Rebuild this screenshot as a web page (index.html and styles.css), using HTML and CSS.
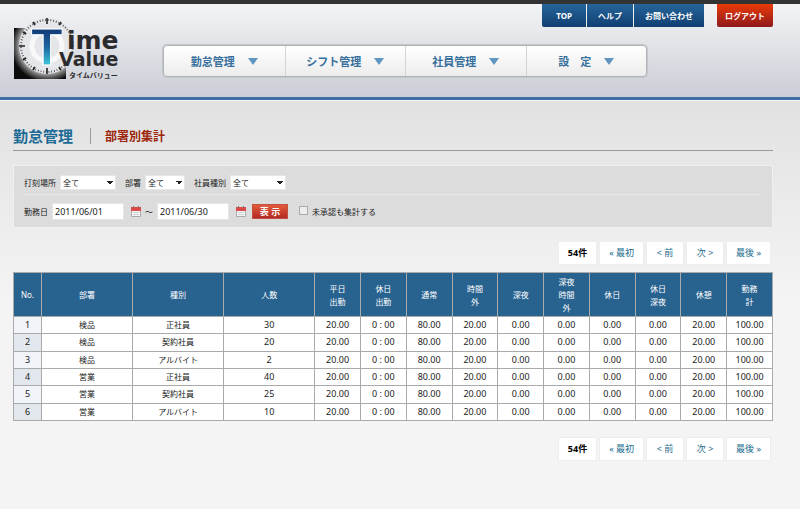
FILE: index.html
```html
<!DOCTYPE html>
<html lang="ja">
<head>
  <meta charset="UTF-8">
  <title>Time Value タイムバリュー | 部署別集計</title>
  <link rel="stylesheet" href="styles.css">
</head>
<body>
  <header class="header">
    <a class="logo" href="#">
      <svg width="110" height="66" viewBox="0 0 110 66" role="img" aria-label="Time Value">
        <defs>
          <radialGradient id="shade" gradientUnits="userSpaceOnUse" cx="34" cy="31" r="44">
            <stop offset="0.6" stop-color="#ccc"/>
            <stop offset="0.68" stop-color="#777"/>
            <stop offset="0.82" stop-color="#0c0c0c"/>
          </radialGradient>
          <linearGradient id="blue" x1="0" y1="0" x2="0" y2="1">
            <stop offset="0.2" stop-color="#123a78"/>
            <stop offset="0.5" stop-color="#1c66a0"/>
            <stop offset="0.8" stop-color="#3fc4d8"/>
          </linearGradient>
        </defs>
        <rect x="1" y="13" width="52" height="51" fill="url(#shade)"/>
        <circle cx="34" cy="31" r="28" fill="#e4e6e9"/>
        <circle cx="34" cy="31" r="15" fill="none" stroke="#f8f8f9" stroke-width="5"/>
        <circle cx="34" cy="31" r="26" fill="none" stroke="#444" stroke-width="2" stroke-dasharray="0.8 1.923"/>
        <g stroke="#222" stroke-width="1.6">
          <path d="M34 3v6M34 53v6M6 31h6M20 6.800l2 3.400M48 6.800l-2 3.400M9.800 17l3.400 2M9.800 45l3.400-2M20 55.200l2-3.400M48 55.200l-2-3.400"/>
        </g>
        <text class="logo-t" x="18" y="50" fill="url(#blue)">T</text>
        <text class="logo-word" x="54" y="34">ime</text>
        <text class="logo-value" x="46" y="51">Value</text>
        <text class="logo-kana" x="56" y="63">タイムバリュー</text>
      </svg>
    </a>
    <div class="header-main">
      <div class="top-links">
        <a href="#">TOP</a>
        <a href="#">ヘルプ</a>
        <a href="#">お問い合わせ</a>
        <a class="logout" href="#">ログアウト</a>
      </div>
      <nav class="menu">
        <a href="#">勤怠管理<span class="arrow"></span></a>
        <a href="#">シフト管理<span class="arrow"></span></a>
        <a href="#">社員管理<span class="arrow"></span></a>
        <a href="#">設　定<span class="arrow"></span></a>
      </nav>
    </div>
  </header>

  <main class="content">
    <div class="title">
      <h1>勤怠管理</h1>
      <h2>部署別集計</h2>
    </div>

    <form class="search">
      <div class="search-row">
        <label for="place">打刻場所</label>
        <select id="place"><option>全て</option></select>
        <label for="section">部署</label>
        <select id="section" class="short"><option>全て</option></select>
        <label for="kind">社員種別</label>
        <select id="kind"><option>全て</option></select>
      </div>
      <div class="search-row">
        <label for="from">勤務日</label>
        <input type="text" id="from" value="2011/06/01">
        <button type="button" class="calendar" aria-label="開始日">
          <svg width="10" height="11" viewBox="0 0 10 11"><path d="M0.500 1.500h9v9h-9z" fill="#f4f4f4" stroke="#aaa"/><path d="M0 1h10v4H0z" fill="#dc4a48"/><path d="M2 0h1v2H2zM7 0h1v2H7z" fill="#777"/><path d="M2 6h6v1H2zM2 8h6v1H2z" fill="#c9d5d5"/></svg>
        </button>
        <span>～</span>
        <input type="text" id="to" value="2011/06/30" aria-label="終了日">
        <button type="button" class="calendar" aria-label="終了日">
          <svg width="10" height="11" viewBox="0 0 10 11"><path d="M0.500 1.500h9v9h-9z" fill="#f4f4f4" stroke="#aaa"/><path d="M0 1h10v4H0z" fill="#dc4a48"/><path d="M2 0h1v2H2zM7 0h1v2H7z" fill="#777"/><path d="M2 6h6v1H2zM2 8h6v1H2z" fill="#c9d5d5"/></svg>
        </button>
        <button type="button" class="show">表 示</button>
        <input type="checkbox" id="pending">
        <label for="pending">未承認も集計する</label>
      </div>
    </form>

    <div class="pager">
      <strong>54件</strong>
      <a href="#">« 最初</a>
      <a href="#">&lt; 前</a>
      <a href="#">次 &gt;</a>
      <a href="#">最後 »</a>
    </div>

    <table class="summary">
      <colgroup>
        <col class="col-no">
        <col class="col-wide" span="3">
        <col span="10">
      </colgroup>
      <thead>
        <tr>
          <th>No.</th><th>部署</th><th>種別</th><th>人数</th>
          <th>平日<br>出勤</th><th>休日<br>出勤</th><th>通常</th><th>時間<br>外</th><th>深夜</th>
          <th>深夜<br>時間<br>外</th><th>休日</th><th>休日<br>深夜</th><th>休憩</th><th>勤務<br>計</th>
        </tr>
      </thead>
      <tbody>
        <tr><th>1</th><td class="name">検品</td><td class="name">正社員</td><td>30</td><td>20.00</td><td>0 : 00</td><td>80.00</td><td>20.00</td><td>0.00</td><td>0.00</td><td>0.00</td><td>0.00</td><td>20.00</td><td>100.00</td></tr>
        <tr><th>2</th><td class="name">検品</td><td class="name">契約社員</td><td>20</td><td>20.00</td><td>0 : 00</td><td>80.00</td><td>20.00</td><td>0.00</td><td>0.00</td><td>0.00</td><td>0.00</td><td>20.00</td><td>100.00</td></tr>
        <tr><th>3</th><td class="name">検品</td><td class="name">アルバイト</td><td>2</td><td>20.00</td><td>0 : 00</td><td>80.00</td><td>20.00</td><td>0.00</td><td>0.00</td><td>0.00</td><td>0.00</td><td>20.00</td><td>100.00</td></tr>
        <tr><th>4</th><td class="name">営業</td><td class="name">正社員</td><td>40</td><td>20.00</td><td>0 : 00</td><td>80.00</td><td>20.00</td><td>0.00</td><td>0.00</td><td>0.00</td><td>0.00</td><td>20.00</td><td>100.00</td></tr>
        <tr><th>5</th><td class="name">営業</td><td class="name">契約社員</td><td>25</td><td>20.00</td><td>0 : 00</td><td>80.00</td><td>20.00</td><td>0.00</td><td>0.00</td><td>0.00</td><td>0.00</td><td>20.00</td><td>100.00</td></tr>
        <tr><th>6</th><td class="name">営業</td><td class="name">アルバイト</td><td>10</td><td>20.00</td><td>0 : 00</td><td>80.00</td><td>20.00</td><td>0.00</td><td>0.00</td><td>0.00</td><td>0.00</td><td>20.00</td><td>100.00</td></tr>
      </tbody>
    </table>

    <div class="pager">
      <strong>54件</strong>
      <a href="#">« 最初</a>
      <a href="#">&lt; 前</a>
      <a href="#">次 &gt;</a>
      <a href="#">最後 »</a>
    </div>
  </main>
</body>
</html>
```
FILE: styles.css
```css
* {
  box-sizing: border-box;
}

body {
  margin: 0;
  font-family: "Noto Sans", "Noto Sans CJK JP", sans-serif;
  font-size: 8px;
  color: #222;
  background: #f4f4f4 linear-gradient(#e1e1e1 100px, #f4f4f4 300px) no-repeat;
}

a {
  text-decoration: none;
}

/* header */
.header {
  display: flex;
  padding: 0 27px 0 13px;
  height: 101px;
  border-top: 4px solid #333;
  border-bottom: 1px solid #f6f8fa;
  background: linear-gradient(#3f6ea3, #3f6ea3) bottom / 100% 3px no-repeat,
    linear-gradient(#f3f4f5, #c9ccd5);
}

.logo {
  width: 150px;
  padding-top: 11px;
}

.logo-t {
  font: bold 52px "Liberation Sans", sans-serif;
  stroke: #fff;
  stroke-width: 1px;
}

.logo-word,
.logo-value {
  font: bold 25px "DejaVu Sans", sans-serif;
  fill: #2b2b2e;
}

.logo-value {
  font-size: 19px;
}

.logo-kana {
  font: bold 7px "Noto Sans CJK JP", sans-serif;
  fill: #2b2b2e;
}

.header-main {
  flex: 1;
}

.top-links {
  display: flex;
  justify-content: flex-end;
  gap: 1px;
}

.top-links a {
  padding: 0 11px;
  line-height: 23px;
  font-size: 8px;
  font-weight: bold;
  color: #fff;
  background: linear-gradient(#26659a, #113f72);
}

.top-links a:first-child {
  padding: 0 14px;
  border-radius: 0 0 0 2px;
}

.top-links .logout {
  margin-left: 12px;
  padding: 0 8px;
  border-radius: 0 0 2px 2px;
  background: linear-gradient(#ea3a08, #8e1a1c);
}

.menu {
  display: grid;
  grid-template-columns: repeat(4, 1fr);
  max-width: 484px;
  margin-top: 18px;
  border: 1px solid #b0b2b6;
  border-radius: 4px;
  background: linear-gradient(#fff, #ececec);
  box-shadow: 0 0 1px 1px #c4c6ca;
}

.menu a {
  display: flex;
  align-items: center;
  justify-content: center;
  gap: 13px;
  line-height: 30px;
  font-size: 11px;
  font-weight: bold;
  font-family: "Noto Sans CJK JP", sans-serif;
  color: #37709c;
}

.menu a + a {
  border-left: 1px solid #d4d4d4;
}

.arrow {
  border: 5px solid transparent;
  border-top: 7px solid #5f95c0;
  border-bottom: 0;
}

/* content */
.content {
  padding: 0 27px 0 13px;
}

.title {
  display: flex;
  align-items: center;
  height: 50px;
  padding-top: 20px;
  border-bottom: 1px solid #999;
}

.title h1 {
  margin: 0;
  padding-right: 17px;
  border-right: 1px solid #999;
  line-height: 16px;
  font-size: 15px;
  font-weight: bold;
  color: #1b6a96;
}

.title h2 {
  margin: 0 0 0 14px;
  font-size: 12px;
  color: #9c2409;
}

.search {
  margin-top: 14px;
  padding: 0 10px;
  border: 1px solid #f0f0f0;
  background: #dcdcdc;
}

.search-row {
  display: flex;
  align-items: center;
  gap: 4px;
  height: 32px;
}

.search-row:first-child {
  height: 29px;
  padding-top: 4px;
  border-bottom: 1px solid #e6e6e6;
}

.search select,
.search input[type="text"] {
  margin: 0;
  border: 1px solid #e6e6e6;
  font-family: inherit;
  color: #222;
  background-color: #fff;
}

.search select {
  appearance: none;
  width: 56px;
  height: 15px;
  margin-right: 5px;
  padding: 0 2px;
  font-size: 8px;
  background-image: conic-gradient(from -45deg at 50% 100%, #222 90deg, transparent 0);
  background-size: 6px 3px;
  background-position: right 2px center;
  background-repeat: no-repeat;
}

.search select.short {
  width: 40px;
}

.search input[type="text"] {
  width: 72px;
  height: 17px;
  padding: 0 2px;
  font-size: 9px;
}

.search input[type="checkbox"] {
  appearance: none;
  width: 9px;
  height: 9px;
  margin: 0 0 2px 7px;
  border: 1px solid #aaa;
  background: #eee;
}

.calendar {
  display: flex;
  margin-left: 3px;
  padding: 0;
  border: 0;
  background: none;
}

.show {
  width: 36px;
  height: 15px;
  margin-left: 2px;
  padding: 0;
  border: 1px solid #c05040;
  line-height: 13px;
  font-family: inherit;
  font-size: 9px;
  font-weight: bold;
  color: #fff;
  background: linear-gradient(#e2593a, #b22a22);
}

.pager {
  display: flex;
  justify-content: flex-end;
  gap: 4px;
  margin: 14px 3px 8px;
}

.pager a,
.pager strong {
  min-width: 36px;
  padding: 0 9px;
  line-height: 22px;
  font-size: 9px;
  text-align: center;
  color: #1b6a8c;
  background: #fff;
  box-shadow: 0 0 0 1px #ededf2;
}

.pager strong {
  color: #000;
}

/* table */
.summary {
  width: 100%;
  height: 149px;
  border-collapse: collapse;
  table-layout: fixed;
  background: #fff;
}

.col-no {
  width: 28px;
}

.col-wide {
  width: 12%;
}

.summary th,
.summary td {
  padding: 0;
  border: 1px solid #aaa;
  line-height: 16px;
  font-size: 9px;
  font-weight: normal;
  text-align: center;
}

.summary thead th {
  height: 44px;
  line-height: 13px;
  font-size: 8px;
  color: #fff;
  background: #28628f;
}

.summary tbody th {
  background: #f1f4f8;
}

.summary tbody tr:nth-child(even) th {
  background: #e1e7ed;
}

.summary .name {
  font-size: 8px;
}

.summary + .pager {
  margin-top: 17px;
}
```
